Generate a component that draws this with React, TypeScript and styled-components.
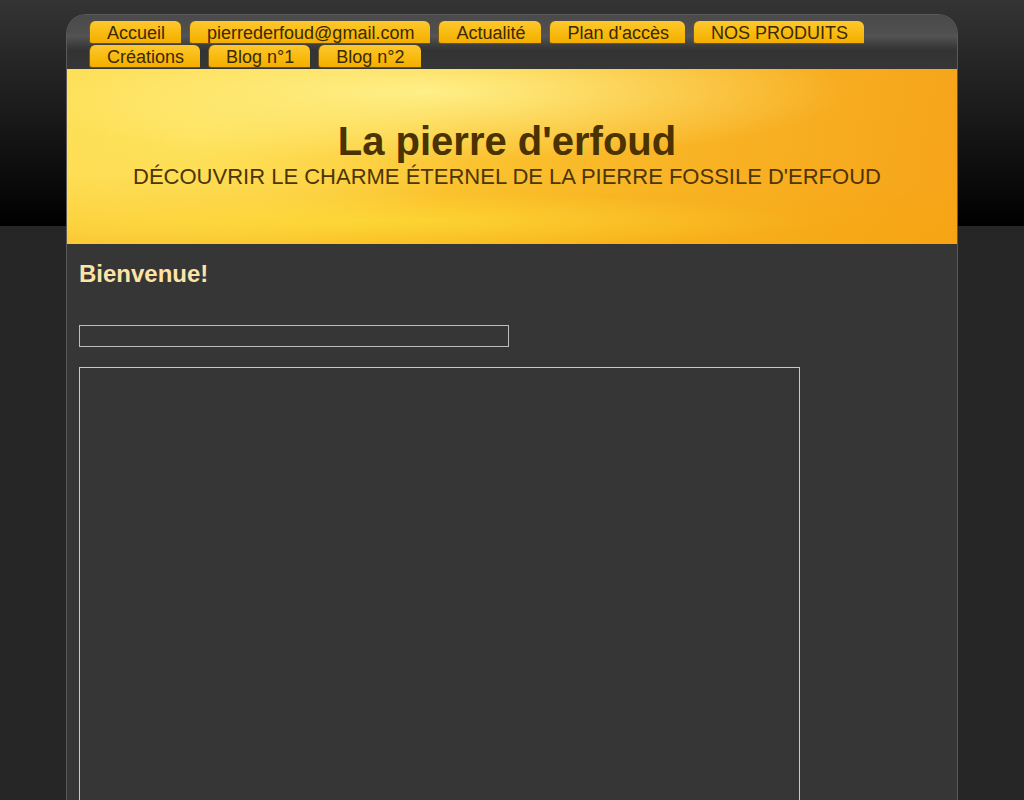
import styled, { createGlobalStyle } from 'styled-components';

const GlobalStyle = createGlobalStyle`
  html, body {
    margin: 0;
    padding: 0;
  }
  body {
    font-family: "Liberation Sans", Arial, sans-serif;
    background: linear-gradient(to bottom, #343434 0px, #000000 226px, #262626 226px) no-repeat;
    background-color: #262626;
    min-height: 800px;
  }
`;

const topTabs = ['Accueil', 'pierrederfoud@gmail.com', 'Actualité', "Plan d'accès", 'NOS PRODUITS'];
const bottomTabs = ['Créations', 'Blog n°1', 'Blog n°2'];

export default function App() {
  return (
    <>
      <GlobalStyle />
      <Page>
        <Container>
          <Nav>
            <TabRow>
              {topTabs.map((t) => (
                <Tab key={t} href="#">{t}</Tab>
              ))}
            </TabRow>
            <TabRow>
              {bottomTabs.map((t) => (
                <Tab key={t} href="#">{t}</Tab>
              ))}
            </TabRow>
          </Nav>
          <Header>
            <SiteTitle>La pierre d'erfoud</SiteTitle>
            <SiteSubtitle>Découvrir le charme éternel de la pierre fossile d'erfoud</SiteSubtitle>
          </Header>
          <Content>
            <Welcome>Bienvenue!</Welcome>
            <SmallFrame />
            <BigFrame />
          </Content>
        </Container>
      </Page>
    </>
  );
}

const Page = styled.div`
  padding-top: 14px;
  height: 786px;
  overflow: hidden;
`;

const Container = styled.div`
  width: 892px;
  margin: 0 auto;
  box-sizing: border-box;
  border: 1px solid #5a5a5a;
  border-bottom: none;
  border-radius: 20px 20px 0 0;
  background: #363636;
  overflow: hidden;
`;

const Nav = styled.div`
  height: 54px;
  padding: 6px 0 0 22px;
  box-sizing: border-box;
  display: flex;
  flex-direction: column;
  gap: 1px;
  background: linear-gradient(
    to bottom,
    #4a4a4a 0px,
    #505050 19px,
    #565656 20px,
    #3e3e3e 30px,
    #333333 35px,
    #363636 54px
  );
`;

const TabRow = styled.div`
  display: flex;
  gap: 8px;
`;

const Tab = styled.a`
  display: block;
  height: 23px;
  line-height: 21px;
  padding: 2px 16px 0 17px;
  font-size: 18px;
  color: #3b2900;
  text-decoration: none;
  background: linear-gradient(to bottom, #fdc82e 0%, #f8b90e 60%, #f4ae00 100%);
  border-radius: 6px 6px 0 3px;
  border-left: 1px solid #7a5a10;
  border-bottom: 1px solid #6d5212;
  box-sizing: border-box;
  white-space: nowrap;
`;

const Header = styled.div`
  height: 175px;
  box-sizing: border-box;
  padding: 49px 10px 0 0;
  text-align: center;
  background:
    radial-gradient(ellipse 420px 28px at 330px 152px, rgba(255, 228, 60, 0.55), rgba(255, 228, 60, 0) 100%),
    radial-gradient(ellipse 420px 70px at 360px 22px, rgba(255, 246, 150, 0.85), rgba(255, 246, 150, 0) 100%),
    radial-gradient(ellipse 280px 120px at 130px 70px, rgba(255, 236, 110, 0.6), rgba(255, 236, 110, 0) 100%),
    linear-gradient(to bottom, rgba(245, 165, 0, 0) 60%, rgba(245, 165, 0, 0.3) 100%),
    linear-gradient(100deg, #fdda4c 0%, #fcca36 35%, #f9b727 62%, #f6a41a 100%);
`;

const SiteTitle = styled.h1`
  margin: 0;
  font-size: 40px;
  line-height: 46px;
  font-weight: 700;
  color: #4a3300;
`;

const SiteSubtitle = styled.p`
  margin: 0;
  font-size: 22px;
  line-height: 26px;
  text-transform: uppercase;
  color: #4d3506;
`;

const Content = styled.div`
  padding: 16px 12px 0 12px;
`;

const Welcome = styled.h2`
  margin: 0;
  font-size: 24px;
  line-height: 28px;
  font-weight: 700;
  color: #fde4a6;
`;

const SmallFrame = styled.div`
  margin-top: 37px;
  width: 430px;
  height: 22px;
  box-sizing: border-box;
  border: 1px solid #bdbdbd;
`;

const BigFrame = styled.div`
  margin-top: 20px;
  width: 721px;
  height: 460px;
  box-sizing: border-box;
  border: 1px solid #c8c8c8;
`;
